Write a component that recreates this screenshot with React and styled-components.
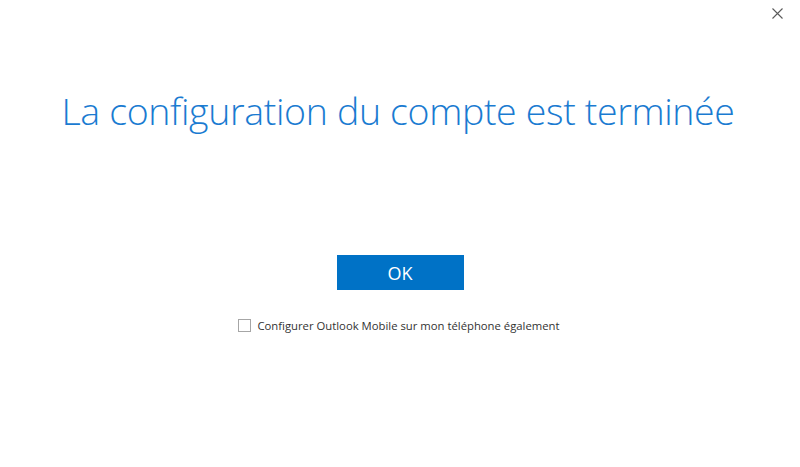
import React from "react";
import styled, { createGlobalStyle } from "styled-components";

const GlobalStyle = createGlobalStyle`
  html, body {
    margin: 0;
    padding: 0;
    background: #ffffff;
  }
  body {
    font-family: "Open Sans", "Segoe UI", sans-serif;
  }
`;

const App = () => {
  return (
    <Window>
      <GlobalStyle />
      <CloseButton aria-label="Fermer">
        <svg width="11" height="11" viewBox="0 0 11 11">
          <path d="M0.5 0.5 L10.5 10.5 M10.5 0.5 L0.5 10.5" stroke="#5a5a5a" strokeWidth="1.1" />
        </svg>
      </CloseButton>
      <Content>
        <Title>La configuration du compte est terminée</Title>
        <OkButton>OK</OkButton>
        <CheckRow>
          <Box type="checkbox" />
          <span>Configurer Outlook Mobile sur mon téléphone également</span>
        </CheckRow>
      </Content>
    </Window>
  );
};

export default App;

const Window = styled.div`
  position: relative;
  width: 800px;
  height: 467px;
  background: #ffffff;
  overflow: hidden;
`;
const CloseButton = styled.button`
  position: absolute;
  top: 7px;
  right: 16px;
  width: 13px;
  height: 13px;
  padding: 0;
  border: none;
  background: transparent;
  display: flex;
  align-items: center;
  justify-content: center;
  cursor: pointer;
`;
const Content = styled.div`
  display: flex;
  flex-direction: column;
  align-items: center;
  padding-top: 84px;
`;
const Title = styled.h1`
  margin: 0 0 0 -4px;
  font-family: "Open Sans", "Segoe UI", sans-serif;
  font-weight: 300;
  font-size: 37.5px;
  line-height: 54px;
  color: #1a7bd1;
  letter-spacing: -0.35px;
  white-space: nowrap;
`;
const OkButton = styled.button`
  margin-top: 117px;
  width: 127px;
  height: 35px;
  border: none;
  background: #0072c6;
  color: #ffffff;
  font-family: "Open Sans", "Segoe UI", sans-serif;
  font-size: 18px;
  cursor: pointer;
`;
const CheckRow = styled.label`
  margin-top: 28px;
  display: flex;
  align-items: center;
  gap: 6px;
  font-family: "Open Sans", "Segoe UI", sans-serif;
  font-size: 11.3px;
  color: #333333;
  margin-left: -2px;
`;
const Box = styled.input`
  appearance: none;
  margin: 0;
  width: 13px;
  height: 13px;
  border: 1px solid #a6a6a6;
  background: #ffffff;
  box-sizing: border-box;
`;
